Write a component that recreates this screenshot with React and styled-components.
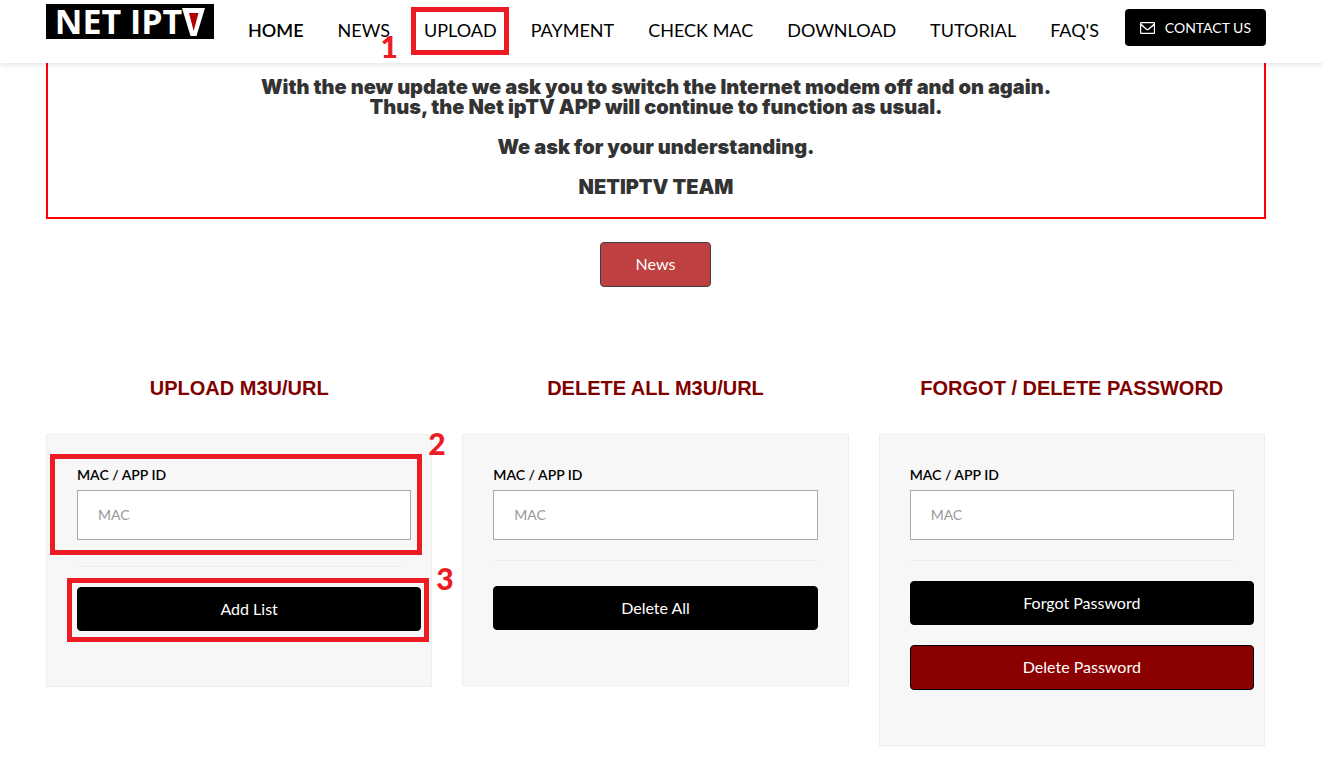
import React from "react";
import styled, { createGlobalStyle } from "styled-components";

const GlobalStyle = createGlobalStyle`
  * {
    box-sizing: border-box;
  }

  body {
    margin: 0;
    background: #fff;
    color: #000;
    font-family: Lato, "Open Sans", sans-serif;
    font-size: 16px;
    overflow-x: hidden;
  }

  h2, p {
    margin: 0;
  }
`;

const Header = styled.header`
  position: relative;
  z-index: 1;
  display: flex;
  align-items: flex-start;
  height: 63px;
  padding: 0 57px 0 46px;
  background: #fff;
  box-shadow: 0 2px 5px rgba(0, 0, 0, 0.1);
`;

const Logo = styled.a`
  display: flex;
  align-items: center;
  justify-content: center;
  width: 168px;
  height: 35px;
  margin-top: 4px;
  background: #000;
  color: #fff;
  font-family: "Open Sans", sans-serif;
  font-size: 34px;
  font-weight: 700;
  line-height: 35px;
  text-decoration: none;
  white-space: nowrap;

  svg {
    flex: none;
  }
`;

const Nav = styled.nav`
  display: flex;
  gap: 34px;
  padding: 18px 24px 0 34px;
`;

const NavLink = styled.a`
  position: relative;
  color: #000;
  font-size: 18px;
  font-weight: ${({ $active }) => ($active ? 600 : 400)};
  line-height: 24px;
  text-decoration: none;
  white-space: nowrap;
`;

const ContactButton = styled.button`
  display: flex;
  align-items: center;
  gap: 10px;
  height: 37px;
  margin-top: 9px;
  margin-left: auto;
  padding: 0 15px;
  border: 0;
  border-radius: 4px;
  background: #000;
  color: #fff;
  font-family: inherit;
  font-size: 14px;
  white-space: nowrap;
`;

const Main = styled.main`
  padding: 0 57px 25px 46px;
`;

const Notice = styled.section`
  padding: 14px 20px 20px;
  border: 2px solid #f00;
  border-top: 0;
  color: #333;
  font-family: Inter, "Liberation Sans", sans-serif;
  font-size: 20px;
  font-weight: 900;
  line-height: 20px;
  text-align: center;

  p + p {
    margin-top: 20px;
  }
`;

const Content = styled.div`
  padding-right: 1px;
`;

const NewsRow = styled.div`
  display: flex;
  justify-content: center;
  padding: 23px 0 90px;
`;

const Button = styled.button`
  display: block;
  width: ${({ $wide }) => ($wide ? "calc(100% + 20px)" : "100%")};
  height: ${({ $danger }) => ($danger ? 45 : 44)}px;
  padding: 0 0 2px;
  border: 1px solid #000;
  border-radius: 4px;
  background: ${({ $danger }) => ($danger ? "#8b0000" : "#000")};
  color: #fff;
  font-family: inherit;
  font-size: 16px;

  & + & {
    margin-top: 20px;
  }
`;

const NewsButton = styled(Button)`
  width: 111px;
  height: 45px;
  border-color: #404040;
  background: #be4040;
`;

const Columns = styled.div`
  display: grid;
  grid-template-columns: repeat(3, 1fr);
  align-items: start;
  gap: 30px;
`;

const Title = styled.h2`
  margin-bottom: 35px;
  color: #800000;
  font-family: "Liberation Sans", Arial, sans-serif;
  font-size: 20px;
  font-weight: 700;
  line-height: 22px;
  text-align: center;
`;

const Card = styled.form`
  padding: 30px 30px 55px;
  border: 1px solid #eee;
  background: #f7f7f7;
`;

const Field = styled.div`
  position: relative;
  width: ${({ $wide }) => ($wide ? "calc(100% + 10px)" : "100%")};
`;

const Label = styled.label`
  display: block;
  margin-bottom: 5px;
  font-size: 14px;
  font-weight: 600;
  line-height: 20px;
`;

const Input = styled.input`
  display: block;
  width: 100%;
  height: 50px;
  padding: 0 20px 2px;
  border: 1px solid #a9a9a9;
  border-radius: 0;
  background: #fff;
  color: #333;
  font-family: inherit;
  font-size: 14px;

  &::placeholder {
    color: #999;
    opacity: 1;
  }
`;

const Divider = styled.hr`
  height: 1px;
  margin: ${({ $top }) => $top}px 0 ${({ $bottom }) => $bottom}px;
  border: 0;
  background: #eee;
`;

const Actions = styled.div`
  position: relative;
`;

// Red frames and step numbers that lie over the controls
const Frame = styled.span`
  position: absolute;
  inset: ${({ $inset }) => $inset};
  border: 5px solid #ed1c24;
  pointer-events: none;
`;

const Step = styled.span`
  position: absolute;
  top: ${({ $top }) => $top}px;
  ${({ $side }) => $side}: calc(100% + ${({ $gap }) => $gap}px);
  color: #ed1c24;
  font-family: Lato, sans-serif;
  font-size: 30px;
  font-weight: 900;
  line-height: 30px;
`;

const navItems = ["HOME", "NEWS", "UPLOAD", "PAYMENT", "CHECK MAC", "DOWNLOAD", "TUTORIAL", "FAQ'S"];

const cards = [
  {
    id: "upload",
    title: "UPLOAD M3U/URL",
    wideField: true,
    wideActions: true,
    divider: [26, 20],
    actions: [{ text: "Add List" }],
    fieldStep: "2",
    actionStep: "3",
  },
  {
    id: "delete",
    title: "DELETE ALL M3U/URL",
    divider: [20, 25],
    actions: [{ text: "Delete All" }],
  },
  {
    id: "password",
    title: "FORGOT / DELETE PASSWORD",
    wideActions: true,
    divider: [20, 20],
    actions: [{ text: "Forgot Password" }, { text: "Delete Password", danger: true }],
  },
];

const LogoV = () => (
  <svg width="23" height="28" viewBox="0 0 23 28" aria-hidden="true">
    <path d="M0 0H23L14.5 28H8.5Z" fill="#fff" />
    <path d="M7 5H16.5L11.7 23Z" fill="#b00000" />
  </svg>
);

const EnvelopeIcon = () => (
  <svg width="15" height="12" viewBox="0 0 15 12" fill="none" stroke="#fff" aria-hidden="true">
    <rect x="0.6" y="0.6" width="13.8" height="10.8" rx="0.6" strokeWidth="1.2" />
    <path d="M0.9 2.2C2.6 4.1 4.3 5.3 5.8 6.7Q7.5 8.2 9.2 6.7C10.7 5.3 12.4 4.1 14.1 2.2" strokeWidth="1.4" />
  </svg>
);

const MacCard = ({ card }) => (
  <section>
    <Title>{card.title}</Title>
    <Card onSubmit={(e) => e.preventDefault()}>
      <Field $wide={card.wideField}>
        <Label htmlFor={`mac-${card.id}`}>MAC / APP ID</Label>
        <Input id={`mac-${card.id}`} type="text" placeholder="MAC" />
        {card.fieldStep && (
          <>
            <Frame $inset="-11px -11px -15px -27px" />
            <Step $top={-37} $side="left" $gap={17}>
              {card.fieldStep}
            </Step>
          </>
        )}
      </Field>
      <Divider $top={card.divider[0]} $bottom={card.divider[1]} />
      <Actions>
        {card.actions.map((action) => (
          <Button key={action.text} type="button" $wide={card.wideActions} $danger={action.danger}>
            {action.text}
          </Button>
        ))}
        {card.actionStep && (
          <>
            <Frame $inset="-9px -28px -11px -10px" />
            <Step $top={-24} $side="left" $gap={35}>
              {card.actionStep}
            </Step>
          </>
        )}
      </Actions>
    </Card>
  </section>
);

const App = () => (
  <>
    <GlobalStyle />
    <Header>
      <Logo href="#home" aria-label="NET IPTV">
        NET IPT
        <LogoV />
      </Logo>
      <Nav>
        {navItems.map((item) => (
          <NavLink key={item} href="#" $active={item === "HOME"}>
            {item}
            {item === "UPLOAD" && (
              <>
                <Frame $inset="-11px -12px -13px -13px" />
                <Step $top={13} $side="right" $gap={26}>
                  1
                </Step>
              </>
            )}
          </NavLink>
        ))}
      </Nav>
      <ContactButton type="button">
        <EnvelopeIcon />
        CONTACT US
      </ContactButton>
    </Header>
    <Main>
      <Notice>
        <p>
          With the new update we ask you to switch the Internet modem off and on again.
          <br />
          Thus, the Net ipTV APP will continue to function as usual.
        </p>
        <p>We ask for your understanding.</p>
        <p>NETIPTV TEAM</p>
      </Notice>
      <Content>
        <NewsRow>
          <NewsButton type="button">News</NewsButton>
        </NewsRow>
        <Columns>
          {cards.map((card) => (
            <MacCard key={card.id} card={card} />
          ))}
        </Columns>
      </Content>
    </Main>
  </>
);

export default App;
